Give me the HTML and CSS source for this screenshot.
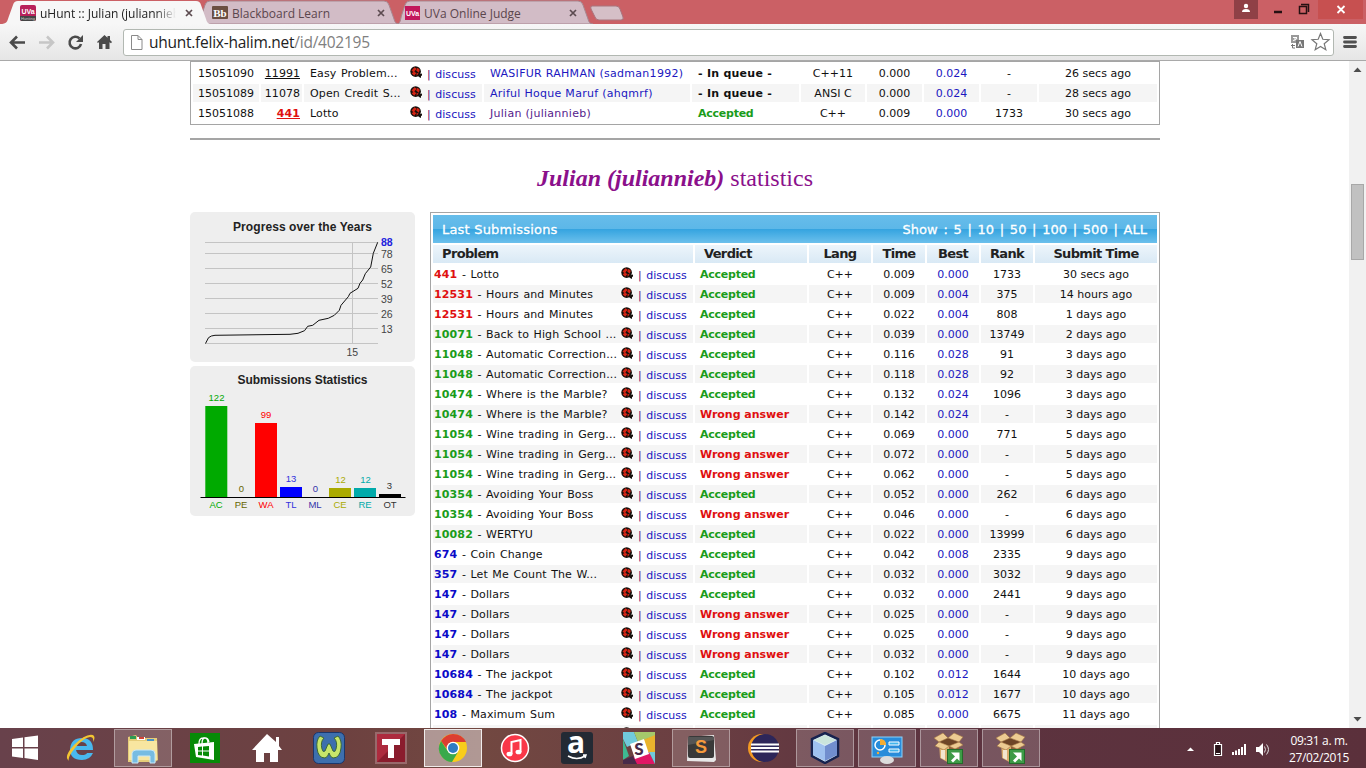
FILE: index.html
```html
<!DOCTYPE html>
<html lang="en">
<head>
<meta charset="utf-8">
<title>uHunt :: Julian (juliannieb)</title>
<link rel="stylesheet" href="styles.css">
</head>
<body>
<svg class="defs" width="0" height="0">
  <symbol id="bug" viewBox="0 0 13 13"><circle cx="5.600" cy="5.600" r="5.300" fill="#17100c"/><path d="M7 9l5-1.500v2l-1 .5v2l-2-1z" fill="#17100c"/><path d="M1.500 4.500L4.500 1.300l2.300 1.500L3.500 6.200zM7.500 1.800l2.300 2-1 3-2.600-2.300zM1.700 7.300l2.600-2 1.900 2-2 2.500zM6.600 6.800l2 .7-2 2.200z" fill="#d42414"/></symbol>
  <symbol id="close" viewBox="0 0 8 8"><path d="M1 1l6 6M7 1L1 7" stroke="#5c4b50" stroke-width="1.700"/></symbol>
  <symbol id="box" viewBox="0 0 32 32"><path d="M6 10l10 3 10-3v15l-10 6-9-5z" fill="#d9ac6e"/><path d="M16 13l10-3v15l-10 6z" fill="#90603a"/><path d="M6 10l8-4 12 4-10 4z" fill="#6d4527"/><path d="M6 10L1 6l9-5 5 5zM26 10l4-5-9-4-6 5zM6 10l-4 4 9 4 5-4zM26 10l4 3-8 4-6-3z" fill="#eccb92" stroke="#a37642" stroke-width=".6"/><path d="M8 18h4v10l-4-2z" fill="#f3e6cf"/><rect x="14.500" y="17.500" width="15" height="14" fill="#3d9b46" stroke="#236b2a"/><path d="M18 20.500h8.500V29L24 26.500 20 30.500l-2-2 4-4z" fill="#fff"/></symbol>
</svg>

<header class="tabs">
  <svg class="tabs-art" width="1366" height="24">
    <path d="M396 24c5 0 4-4 6-10l3-9q1-4 5-4h168q4 0 5 4l5 14q1 5 5 5z" fill="#d2bcc6" stroke="#a88790"/>
    <path d="M196 24c5 0 4-4 6-10l3-9q1-4 5-4h174q4 0 5 4l5 14q1 5 5 5z" fill="#d2bcc6" stroke="#a88790"/>
    <path d="M0 24c7 0 7-2 9-8l4-11q1-4 5-4h178q4 0 5 4l5 14q1 5 5 5z" fill="#f7f7f7"/>
    <path d="M592 6h24q3 0 4 3l3 8q1 3-2 3h-22q-3 0-4-3l-4-8q-1-3 1-3z" fill="#d5bfc7" stroke="#a9747d"/>
  </svg>
  <div class="tab tab-a">
    <svg width="16" height="16"><rect width="16" height="16" rx="2" fill="#b8215a"/><path d="M0 11h16v3q0 2-2 2H2q-2 0-2-2z" fill="#444"/><text x="8" y="9" class="ic-uva">UVa</text><text x="8" y="15" class="ic-sub">Hunting</text></svg>
    <span class="tab-name fade">uHunt :: Julian (juliannieb)</span><svg class="x" width="8" height="8"><use href="#close"/></svg>
  </div>
  <div class="tab tab-b">
    <svg width="16" height="16"><rect y="1" width="16" height="13" rx="1" fill="#6b4f42"/><text x="8" y="12" class="ic-bb">Bb</text></svg>
    <span class="tab-name">Blackboard Learn</span><svg class="x" width="8" height="8"><use href="#close"/></svg>
  </div>
  <div class="tab tab-c">
    <svg width="15" height="16"><rect y="1" width="15" height="14" fill="#c2185b"/><text x="7.500" y="11" class="ic-uva">UVa</text></svg>
    <span class="tab-name">UVa Online Judge</span><svg class="x" width="8" height="8"><use href="#close"/></svg>
  </div>
  <svg class="winctl" width="133" height="24">
    <rect x="2" width="24" height="19" fill="#8f4046"/><circle cx="14" cy="6" r="2.200" fill="#fff"/><path d="M10 12q0-3 4-3t4 3z" fill="#fff"/>
    <path d="M42 12h8" stroke="#251012" stroke-width="2.500"/>
    <path d="M67.500 6.500h7v7h-7zM69 4.500h7.500V12" fill="none" stroke="#251012" stroke-width="1.500"/>
    <rect x="86" width="45" height="19" fill="#c75050"/><path d="M105.500 6l7 7M112.500 6l-7 7" stroke="#fff" stroke-width="1.800"/>
  </svg>
</header>

<nav class="toolbar">
  <svg width="123" height="36">
    <g fill="none" stroke="#4b4b4b" stroke-width="2.600"><path d="M25 18.500H12M17 12.500l-6 6 6 6"/><path d="M39 18.500h13M47 12.500l6 6-6 6" stroke="#c6c6c6"/><path d="M79.500 14.500a5.800 5.800 0 1 0 1.500 5.500"/></g>
    <path d="M83 11v7h-7z" fill="#4b4b4b"/>
    <path d="M97 18l7.500-7 3 2.800V12h2.500v4l2 2-1 1.200-1.500-1V25h-4v-5h-3v5h-3.500v-7l-1 1z" fill="#4b4b4b"/>
  </svg>
  <div class="omnibox">
    <svg width="12" height="15"><path d="M.5.500h6.500l4 4v10H.500zM7 .500v4h4" fill="#fff" stroke="#8a8a8a"/></svg>
    <span class="url">uhunt.felix-halim.net<i>/id/402195</i></span>
    <svg class="right-ic" width="42" height="20"><rect x="1" y="3" width="8" height="8" fill="#999"/><rect x="6" y="8" width="8" height="8" fill="#777"/><path d="M3 5.500h4M5 5v3M3 8.500q3 0 4-2.500M8 14.500l2-5 2 5" stroke="#fff" fill="none"/><path d="M1 13.500h4M2.500 12v4H5" stroke="#777" fill="none"/><path d="M30.500 1.500l2.300 5.800 6.200.4-4.800 4 1.600 6-5.300-3.300-5.300 3.300 1.600-6-4.800-4 6.200-.4z" fill="#fff" stroke="#777" stroke-width="1.200"/></svg>
  </div>
  <svg width="14" height="14"><path d="M1.500 2.500h11M1.500 7h11M1.500 11.500h11" stroke="#505050" stroke-width="2.800" stroke-linecap="round"/></svg>
</nav>

<div class="viewport">
  <main class="page">
    <section class="box live" id="live"></section>
    <hr class="rule">
    <h1 class="title"><b>Julian (juliannieb)</b> statistics</h1>
    <div class="columns">
      <aside class="charts">
        <svg class="chart" width="225" height="150">
          <text x="112.500" y="19" class="ct" textLength="139">Progress over the Years</text>
          <path d="M15 30.500h173M15 41.500h173M15 56.500h173M15 71.500h173M15 86.500h173M15 101.500h173M15 116.500h173M15 131.500h173M162.500 30v101" stroke="#c4c4c4" fill="none"/>
          <path d="M15.500 131.500l3-5.800Q21 123.500 25 123.300L100 122.300l8-1 6.500-2.600 3.200-4.400 5-1 6.300-5 9.300-2 6-3 5-5 1.700-5 7.300-8.600 1.700-3.400 8-5 2-5 2.700-3.300 2.600-6.300 5.400-6.700 2.600-13.700 4.400-11" stroke="#111" fill="none"/>
          <g class="cy"><text x="191" y="34" class="top">88</text><text x="191" y="45.500">78</text><text x="191" y="60.500">65</text><text x="191" y="75.500">52</text><text x="191" y="90.500">39</text><text x="191" y="105.500">26</text><text x="191" y="120.500">13</text><text x="156.500" y="143.500">15</text></g>
        </svg>
        <svg class="chart" width="225" height="150">
          <text x="112.500" y="18" class="ct" textLength="130">Submissions Statistics</text>
          <g class="cb">
            <g fill="#0a0"><rect x="15.300" y="40" width="22" height="91"/><text x="26.500" y="35">122</text><text x="26" y="142">AC</text></g>
            <g fill="#660"><text x="51.500" y="126">0</text><text x="51" y="142">PE</text></g>
            <g fill="#f00"><rect x="65" y="57" width="22" height="74"/><text x="76" y="52">99</text><text x="76" y="142">WA</text></g>
            <g fill="#00f"><rect x="90" y="121" width="22" height="10"/></g><g fill="#33d"><text x="101" y="116">13</text><text x="101" y="142">TL</text></g>
            <g fill="#33a"><text x="125.500" y="126">0</text><text x="125" y="142">ML</text></g>
            <g fill="#aa0"><rect x="139" y="122" width="22" height="9"/><text x="150.500" y="117">12</text><text x="150" y="142">CE</text></g>
            <g fill="#0aa"><rect x="164" y="122" width="22" height="9"/><text x="175.500" y="117">12</text><text x="175" y="142">RE</text></g>
            <g fill="#000"><rect x="189" y="128" width="22" height="3"/></g><g fill="#333"><text x="199.500" y="123">3</text><text x="200" y="142">OT</text></g>
          </g>
          <path d="M10.500 131.500h205" stroke="#000"/>
        </svg>
      </aside>
      <section class="box last">
        <div class="bar"><span class="cap">Last Submissions</span><span class="show">Show : 5 | 10 | 50 | 100 | 500 | ALL</span></div>
        <div class="row head"><span>Problem</span><span>Verdict</span><span>Lang</span><span>Time</span><span>Best</span><span>Rank</span><span>Submit Time</span></div>
        <div id="rows"></div>
      </section>
    </div>
  </main>
  <div class="scroll">
    <svg width="17" height="17"><path d="M4.500 11h8l-4-4.500z" fill="#4d4d4d"/></svg>
    <div class="thumb"></div>
    <svg width="17" height="17"><path d="M4.500 6h8l-4 4.500z" fill="#4d4d4d"/></svg>
  </div>
</div>

<footer class="taskbar">
  <div class="apps">
    <span class="app start"><svg width="28" height="26"><path d="M1 4l11-1.500V12H1zM13.500 2.300L27 .500V12H13.500zM1 13.500h11V23L1 21.500zM13.500 13.500H27V25l-13.500-2z" fill="#fff"/></svg></span>
    <span class="app"><svg width="32" height="32" viewBox="0 0 32 32"><path d="M28 18H11q1 5 6 5 4 0 5-2h6q-3 7-11 7Q5 28 5 17 6 6 17 6q11 0 11 12zM22 14q-1-4-5.500-4T11 14z" fill="#49b8ee"/><path d="M4 29Q-2 25 9 13 21 1 28 3q3 2 0 7 1-5-3-5-7 1-15 11T4 29z" fill="#f3c532"/></svg></span>
    <span class="app open"><svg width="32" height="32" viewBox="0 0 32 32"><path d="M1 5l8-2 2 3h19l1 22-3 2H1z" fill="#e6cd79"/><path d="M3 4h6v3H3z" fill="#2d9b52"/><path d="M10 5h8v3h-8z" fill="#fff"/><path d="M12 5h5v2h-5z" fill="#d24436"/><path d="M20 7h7v3h-7z" fill="#4793c8"/><path d="M2 9h28v19H2z" fill="#f8e6a0"/><path d="M5 21q1-3 4-3h15q4 0 4 4v9h-5v-7H11v7H5z" fill="#77bce2" stroke="#cae8f7"/></svg></span>
    <span class="app"><svg width="30" height="30"><rect width="30" height="30" fill="#078a07"/><path d="M4 11l20-2v18L6 24z" fill="#fff"/><path d="M9 11q0-6 4-6 5-1 5 5M12 11q0-6 3-6 3 0 4 4" stroke="#fff" stroke-width="1.300" fill="none"/><path d="M8 14l4-.5v4H8zM13 13.500l6-.5v4.500h-6zM8 18.500h4v4l-4-.5zM13 18.500h6v5l-6-1z" fill="#078a07"/></svg></span>
    <span class="app"><svg width="30" height="28"><path d="M15 0l9 8V3h3v9l3 4h-4v12h-8v-9h-6v9H4V16H0z" fill="#fff"/></svg></span>
    <span class="app"><svg width="32" height="32"><rect x=".5" y=".5" width="31" height="31" rx="5" fill="#3d6fae" stroke="#1b376c"/><path d="M7 4Q3 8 4 16q1 10 8 10 3-1 4-5 1 4 4 5 7 0 8-10 1-8-3-12l-4 2q4 4 2 11-1 4-3 2l-3-7h-2l-3 7q-2 2-3-2-2-7 2-11z" fill="#c7e66a" stroke="#3c6838"/></svg></span>
    <span class="app"><svg width="32" height="32"><rect x="1" y="1" width="30" height="30" fill="#ad2b3e" stroke="#98696b" stroke-width="2"/><path d="M2 30L30 2v28z" fill="#8a1c2d"/><path d="M7 7h18v6h-6v13h-6V13H7z" fill="#fff"/></svg></span>
    <span class="app open active"><svg width="30" height="30" viewBox="0 0 30 30"><circle cx="15" cy="15" r="14" fill="#f8cd1b"/><path d="M3 8Q8 1 15 1q9 0 13 8H15q-6 1-6 7z" fill="#dc3e31"/><path d="M3 8q-5 9 1 16 4 5 10 5l6-10q-6 4-11-2z" fill="#39a94b"/><circle cx="15" cy="15" r="6.300" fill="#fff"/><circle cx="15" cy="15" r="5" fill="#2f7cc2"/></svg></span>
    <span class="app"><svg width="30" height="30"><circle cx="15" cy="15" r="13.500" fill="#f93748" stroke="#fff" stroke-width="1.500"/><path d="M11.500 21V9l9-2v12" stroke="#fff" stroke-width="2" fill="none"/><ellipse cx="9.500" cy="21" rx="3" ry="2.300" fill="#fff"/><ellipse cx="18.500" cy="19" rx="3" ry="2.300" fill="#fff"/></svg></span>
    <span class="app"><svg width="32" height="32"><rect width="32" height="32" rx="3" fill="#232a34"/><text x="15" y="21" class="ic-a">a</text><path d="M7 24q9 5 17 0M22 23l3 0-1 3" stroke="#fff" stroke-width="1.500" fill="none"/></svg></span>
    <span class="app"><svg width="32" height="32"><path d="M0 0h11l4 10-11 5-4-8z" fill="#70cadb"/><path d="M11 0h21v4L15 10z" fill="#a5c96b"/><path d="M20 8l12-5v17l-6 3z" fill="#e9b32d"/><path d="M0 7l6 17-6 4z" fill="#3eb991"/><path d="M0 28l26-8 6 12H0z" fill="#e01765"/><path d="M10 24l4 8H0v-4z" fill="#472a49"/><path d="M26 20h6v12z" fill="#70cadb"/><path d="M7 12l14-5 5 15-14 5z" fill="#fff"/><text x="16" y="23" class="ic-s">S</text></svg></span>
    <span class="app open"><svg width="32" height="32"><path d="M3 5l26-2 2 25-2 2-27-1z" fill="#e8e8e8"/><rect x="3" y="4" width="26" height="22" rx="2" fill="#393939"/><path d="M3 13l26-5v-3H3z" fill="#555"/><text x="16" y="21" class="ic-st">S</text></svg></span>
    <span class="app"><svg width="34" height="32"><circle cx="16" cy="16" r="14" fill="#f39922"/><circle cx="19" cy="16" r="14" fill="#2d2659"/><path d="M5 12.500h28M5 16h28M5 19.500h28" stroke="#fff" stroke-width="2"/></svg></span>
    <span class="app open"><svg width="32" height="32"><path d="M16 1l13 6v17l-13 7L3 24V7z" fill="#dcecf5" stroke="#17234f" stroke-width="2.500"/><path d="M4 8l12 6v15L4 23z" fill="#9fc1ef"/><path d="M16 14l12-6v15l-12 6z" fill="#718ece"/><path d="M16 3l11 5-11 5L5 8z" fill="#cbe5dc"/></svg></span>
    <span class="app open"><svg width="32" height="32"><rect x="1" y="5" width="30" height="20" fill="#288cda" stroke="#8cd2fa"/><circle cx="9" cy="13" r="5" fill="none" stroke="#fff" stroke-width="1.500"/><path d="M9 13V7q6 0 6 6z" fill="#f5ac32"/><path d="M18 10h10v3H18zM18 17h10v3H18z" fill="#42b4ec" stroke="#fff"/><circle cx="7" cy="21" r="1.200" fill="#f5ac32"/><ellipse cx="16" cy="28" rx="7" ry="4" fill="#dcdcdc"/></svg></span>
    <span class="app open"><svg width="32" height="32"><use href="#box"/></svg></span>
    <span class="app open"><svg width="32" height="32"><use href="#box"/></svg></span>
  </div>
  <svg class="tray" width="90" height="40"><path d="M3 23h7l-3.500-3.500z" fill="#fff"/><path d="M30.500 16.500h7v11h-7zM32.500 14.500h3v2h-3z" fill="#2a1419" stroke="#fff" stroke-width="1.200"/><path d="M32 25.500h4" stroke="#fff"/><path d="M49 27v-3M52 27v-4.500M55 27v-6M58 27v-8M61 27V16" stroke="#fff" stroke-width="2"/><path d="M72 19h3l4-4v13l-4-4h-3z" fill="#fff"/><path d="M80.500 18.500q2 3 0 6M82.500 16.500q4 5 0 10" stroke="#ddd" fill="none"/></svg>
  <div class="clock"><span>09:31 a. m.</span><span>27/02/2015</span></div>
</footer>
<script src="rows.js"></script>
</body>
</html>
```
FILE: styles.css
```css
* { box-sizing: border-box; }
body { margin: 0; width: 1366px; height: 768px; overflow: hidden; background: #fff; font-family: "DejaVu Sans", Verdana, sans-serif; font-size: 11px; color: #111; }
svg { display: block; flex: none; }
.defs { position: absolute; }
.tabs { position: relative; height: 24px; background: #cb6065; display: flex; font-family: "Open Sans", "Noto Sans", sans-serif; font-size: 12px; color: #5b464d; }
.tabs-art { position: absolute; left: 0; top: 0; }
.tab { position: relative; display: flex; align-items: center; height: 26px; }
.tab-a { width: 212px; padding-left: 20px; color: #222; }
.tab-b { width: 192px; }
.tab-c { width: 828px; padding-left: 1px; }
.tab-name { width: 136px; margin-left: 4px; white-space: nowrap; overflow: hidden; }
.tab-b .tab-name { width: 136px; }
.tab-c .tab-name { width: 144px; }
.fade { -webkit-mask-image: linear-gradient(90deg, #000 85%, transparent); mask-image: linear-gradient(90deg, #000 85%, transparent); }
.x { margin-left: 9px; }
.tab-c .x { margin-left: 1px; }
.winctl { position: relative; }
.ic-uva { font: bold 7px "Liberation Sans", sans-serif; fill: #fff; text-anchor: middle; }
.ic-sub { font: 4px "Liberation Sans", sans-serif; fill: #ccc; text-anchor: middle; }
.ic-bb { font: bold 11px "Liberation Serif", serif; fill: #fff; text-anchor: middle; }
.ic-a { font: bold 30px/1 "Open Sans", sans-serif; fill: #fff; text-anchor: middle; }
.ic-s { font: 900 17px Lato, sans-serif; fill: #472a49; text-anchor: middle; }
.ic-st { font: bold 18px "Liberation Sans", sans-serif; fill: #f59a3c; text-anchor: middle; }
.toolbar { height: 37px; display: flex; align-items: center; background: linear-gradient(#f7f7f7, #e6e6e6); border-bottom: 1px solid #a9a9a9; }
.omnibox { width: 1211px; height: 27px; margin-right: 9px; padding: 0 1px 0 7px; display: flex; align-items: center; background: #fff; border: 1px solid #b2b8b2; border-radius: 3px; }
.url { margin-left: 6px; font: 15.5px "Open Sans", sans-serif; color: #222; letter-spacing: -.25px; }
.url i { font-style: normal; color: #808080; }
.right-ic { margin-left: auto; }
.viewport { height: 667px; display: flex; overflow: hidden; }
.page { width: 1349px; padding: 0 189px 0 190px; height: 667px; overflow: hidden; }
.box { border: 1px solid #a5a5a5; padding: 2px; background: #fff; }
.live { width: 970px; height: 64px; padding-top: 2px; }
.row { display: grid; grid-template-columns: 260px 112px 62px 52px 52px 52px 122px; column-gap: 2px; height: 18px; margin-bottom: 2px; line-height: 20px; text-align: center; white-space: nowrap; letter-spacing: .03px; }
.live .row { grid-template-columns: 66px 41px 178px 206px 107px 64px 55px 55px 56px 118px; }
.row > span { height: 18px; }
.row.alt > span { background: #f5f5f5; }
.row .l { text-align: left; padding-left: 5px; }
.live .row .l { padding-left: 6px; }
.live .r { text-align: right; padding-right: 2px; }
.prob { display: flex; text-align: left; padding-left: 1px; }
.live .prob { padding-left: 6px; }
.prob .name { width: 187px; height: 18px; overflow: hidden; letter-spacing: .12px; word-spacing: .9px; }
.live .prob .name { width: 100px; }
.prob svg { margin-top: 2px; }
.talk { margin-left: 4px; position: relative; top: 1px; color: #606; }
.talk a { color: #2017c0; margin-left: 1px; }
.row b { letter-spacing: .13px; }
.link { color: #2017c0; }
.l .link { letter-spacing: .28px; }
.visited { color: #551a8b; letter-spacing: .28px; }
.ok { color: #1a9c1a; }
.row b.ok { letter-spacing: -.25px; }
.row b.bad { letter-spacing: -.02px; }
.l > b:not([class]) { letter-spacing: .25px; }
.bad, .red { color: #e01010; }
.green { color: #1a9c1a; }
.blue { color: #0b0bc8; }
.rule { height: 2px; margin: 13px 0 0; border: 0; background: #a5a5a5; width: 970px; }
.title { margin: 24px 0 0; height: 48px; font: 24px/28px "Liberation Serif", serif; color: #8b108b; text-align: center; }
.title b { font-style: italic; }
.columns { display: flex; gap: 15px; }
.charts { display: flex; flex-direction: column; gap: 4px; }
.chart { background: #eee; border-radius: 5px; font-family: "Liberation Sans", Arial, sans-serif; }
.ct { font-size: 12px; font-weight: bold; text-anchor: middle; fill: #222; }
.cy { font-size: 10.5px; fill: #444; }
.cy .top { font-weight: bold; fill: #22d; }
.cb { font-size: 9.5px; text-anchor: middle; }
.last { width: 730px; height: 620px; }
.bar { height: 28px; margin-bottom: 2px; padding: 0 10px 0 9px; display: flex; justify-content: space-between; line-height: 29px; font-size: 13px; color: #fff; background: linear-gradient(#67bdea 0, #5cb7e8 50%, #35a4e0 51%, #6cc0ec 100%); -webkit-text-stroke: .3px #fff; }
.cap { letter-spacing: .2px; }
.show { letter-spacing: .05px; word-spacing: 1.45px; }
.head { font-size: 13px; font-weight: bold; color: #222; line-height: 18px; letter-spacing: -.65px; }
.head span { background: linear-gradient(#edf5fb, #d9e9f5); }
.head span:nth-child(-n+2) { text-align: left; padding-left: 9px; }
.scroll { width: 17px; background: #f1f1f1; display: flex; flex-direction: column; }
.thumb { width: 13px; height: 76px; margin: 106px 2px 451px; background: #c1c1c1; border: 1px solid #a8a8a8; }
.taskbar { height: 40px; display: flex; color: #fff; background: linear-gradient(90deg, #68414b 0, #6d4140 25%, #724841 35%, #6b3f42 50%, #5d3440 65%, #5b303b 100%); }
.apps { display: flex; gap: 4px; padding: 1px 0 1px 50px; width: 1184px; }
.app { width: 58px; height: 38px; display: flex; align-items: center; justify-content: center; flex: none; }
.start { width: 48px; margin-left: -50px; padding-left: 2px; }
.open { background: #ffffff2b; border: 1px solid #ffffff60; }
.active { background: #ffffff70; border-color: #ffffffd0; }
.clock { margin-left: 4px; width: 82px; display: flex; flex-direction: column; align-items: center; padding-top: 4px; font: 12px/17px "Open Sans", sans-serif; letter-spacing: -.35px; }
```
FILE: rows.js
```javascript
const talk = '<svg width="13" height="13"><use href="#bug"/></svg><span class="talk">| <a>discuss</a></span>';
const cells = list => list.map(c => `<span>${c}</span>`).join('');

const live = [
  ['15051090', '<u>11991</u>', 'Easy Problem...', '<span class="link">WASIFUR RAHMAN (sadman1992)</span>', '<b>- In queue -</b>', 'C++11', '0.000', '0.024', '-', '26 secs ago'],
  ['15051089', '11078', 'Open Credit S...', '<span class="link">Ariful Hoque Maruf (ahqmrf)</span>', '<b>- In queue -</b>', 'ANSI C', '0.000', '0.024', '-', '28 secs ago'],
  ['15051088', '<b class="red"><u>441</u></b>', 'Lotto', '<span class="visited">Julian (juliannieb)</span>', '<b class="ok">Accepted</b>', 'C++', '0.009', '0.000', '1733', '30 secs ago']
];
document.getElementById('live').innerHTML = live.map((r, i) =>
  `<div class="row${i % 2 ? ' alt' : ''}"><span>${r[0]}</span><span class="r">${r[1]}</span><span class="prob"><span class="name">${r[2]}</span>${talk}</span><span class="l">${r[3]}</span><span class="l">${r[4]}</span>${cells([r[5], r[6], `<span class="link">${r[7]}</span>`, r[8], r[9]])}</div>`).join('');

const subs = `red|441|Lotto|A|0.009|0.000|1733|30 secs
red|12531|Hours and Minutes|A|0.009|0.004|375|14 hours
red|12531|Hours and Minutes|A|0.022|0.004|808|1 days
green|10071|Back to High School ...|A|0.039|0.000|13749|2 days
green|11048|Automatic Correction...|A|0.116|0.028|91|3 days
green|11048|Automatic Correction...|A|0.118|0.028|92|3 days
green|10474|Where is the Marble?|A|0.132|0.024|1096|3 days
green|10474|Where is the Marble?|W|0.142|0.024|-|3 days
green|11054|Wine trading in Gerg...|A|0.069|0.000|771|5 days
green|11054|Wine trading in Gerg...|W|0.072|0.000|-|5 days
green|11054|Wine trading in Gerg...|W|0.062|0.000|-|5 days
green|10354|Avoiding Your Boss|A|0.052|0.000|262|6 days
green|10354|Avoiding Your Boss|W|0.046|0.000|-|6 days
green|10082|WERTYU|A|0.022|0.000|13999|6 days
blue|674|Coin Change|A|0.042|0.008|2335|9 days
blue|357|Let Me Count The W...|A|0.032|0.000|3032|9 days
blue|147|Dollars|A|0.032|0.000|2441|9 days
blue|147|Dollars|W|0.025|0.000|-|9 days
blue|147|Dollars|W|0.025|0.000|-|9 days
blue|147|Dollars|W|0.032|0.000|-|9 days
blue|10684|The jackpot|A|0.102|0.012|1644|10 days
blue|10684|The jackpot|A|0.105|0.012|1677|10 days
blue|108|Maximum Sum|A|0.085|0.000|6675|11 days`.split('\n').map(s => s.split('|'));
document.getElementById('rows').innerHTML = subs.map((r, i) =>
  `<div class="row${i % 2 ? ' alt' : ''}"><span class="prob"><span class="name"><b class="${r[0]}">${r[1]}</b> - ${r[2]}</span>${talk}</span><span class="l">${r[3] === 'A' ? '<b class="ok">Accepted</b>' : '<b class="bad">Wrong answer</b>'}</span>${cells(['C++', r[4], `<span class="link">${r[5]}</span>`, r[6], r[7] + ' ago'])}</div>`).join('')
  + `<div class="row alt"><span class="prob"><span class="name"></span>${talk}</span>${cells(['', '', '', '', '', ''])}</div>`;
```
